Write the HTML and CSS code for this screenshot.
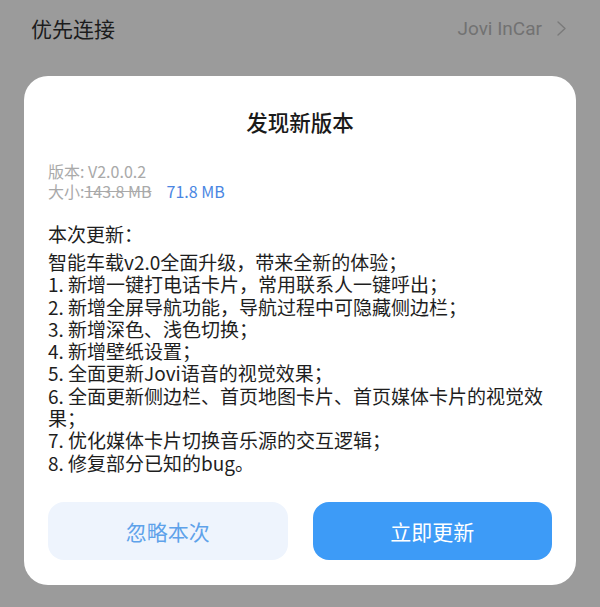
FILE: index.html
```html
<!DOCTYPE html>
<html lang="zh-CN">
<head>
<meta charset="utf-8">
<title>发现新版本</title>
<link rel="stylesheet" href="styles.css">
</head>
<body>
  <header class="topbar">
    <span class="topbar-title">优先连接</span>
    <span class="topbar-value">
      Jovi InCar
      <svg class="chevron" width="11" height="15" viewBox="0 0 11 15" aria-hidden="true">
        <path d="M2 1 L9 7.5 L2 14" fill="none" stroke="#7a7a7a" stroke-width="1.4" stroke-linecap="round" stroke-linejoin="round"/>
      </svg>
    </span>
  </header>

  <section class="dialog">
    <h1 class="dialog-title">发现新版本</h1>

    <div class="meta">
      <div>版本: V2.0.0.2</div>
      <div>大小:<s class="old-size">143.8 MB</s><span class="new-size">71.8 MB</span></div>
    </div>

    <div class="notes">
      <div class="notes-head">本次更新：</div>
      <div>智能车载v2.0全面升级，带来全新的体验；</div>
      <div>1. 新增一键打电话卡片，常用联系人一键呼出；</div>
      <div>2. 新增全屏导航功能，导航过程中可隐藏侧边栏；</div>
      <div>3. 新增深色、浅色切换；</div>
      <div>4. 新增壁纸设置；</div>
      <div>5. 全面更新Jovi语音的视觉效果；</div>
      <div>6. 全面更新侧边栏、首页地图卡片、首页媒体卡片的视觉效果；</div>
      <div>7. 优化媒体卡片切换音乐源的交互逻辑；</div>
      <div>8. 修复部分已知的bug。</div>
    </div>

    <div class="actions">
      <button class="btn btn-ghost" type="button">忽略本次</button>
      <button class="btn btn-primary" type="button">立即更新</button>
    </div>
  </section>
</body>
</html>
```

FILE: styles.css
```css
* {
  box-sizing: border-box;
}

body {
  margin: 0;
  background: #9b9b9b;
  font-family: "Noto Sans CJK SC", "Noto Sans", sans-serif;
  color: #1e1e1e;
}

/* settings row behind the dimmed overlay */
.topbar {
  height: 56px;
  display: flex;
  align-items: center;
  justify-content: space-between;
  padding: 0 33px 0 31px;
}

.topbar-title {
  font-size: 21px;
  color: #1c1c1c;
}

.topbar-value {
  display: flex;
  align-items: center;
  gap: 14px;
  font-family: Roboto, "Noto Sans", sans-serif;
  font-size: 19px;
  color: #727272;
}

.chevron {
  display: block;
}

/* update dialog */
.dialog {
  margin: 20px 24px 0;
  background: #ffffff;
  border-radius: 24px;
  padding: 30px 24px 25px;
}

.dialog-title {
  margin: 0;
  text-align: center;
  font-size: 21.5px;
  line-height: 32px;
  font-weight: 500;
  color: #1a1a1a;
}

.meta {
  margin-top: 23px;
  font-size: 16px;
  line-height: 20px;
  color: #a9a9a9;
}

.old-size {
  text-decoration: line-through;
}

.new-size {
  margin-left: 15px;
  color: #4a86e2;
}

.notes {
  margin-top: 22px;
  font-size: 19px;
  line-height: 22.3px;
  color: #1e1e1e;
}

.notes-head {
  margin-bottom: 5.7px;
}

.actions {
  margin-top: 28px;
  display: flex;
  gap: 25px;
}

.btn {
  flex: 1;
  height: 58px;
  border: 0;
  border-radius: 16px;
  font-family: "Noto Sans CJK SC", sans-serif;
  font-size: 21px;
  cursor: pointer;
}

.btn-ghost {
  background: #eef4fd;
  color: #5ea2ea;
}

.btn-primary {
  background: #3d9bf7;
  color: #ffffff;
}
```
